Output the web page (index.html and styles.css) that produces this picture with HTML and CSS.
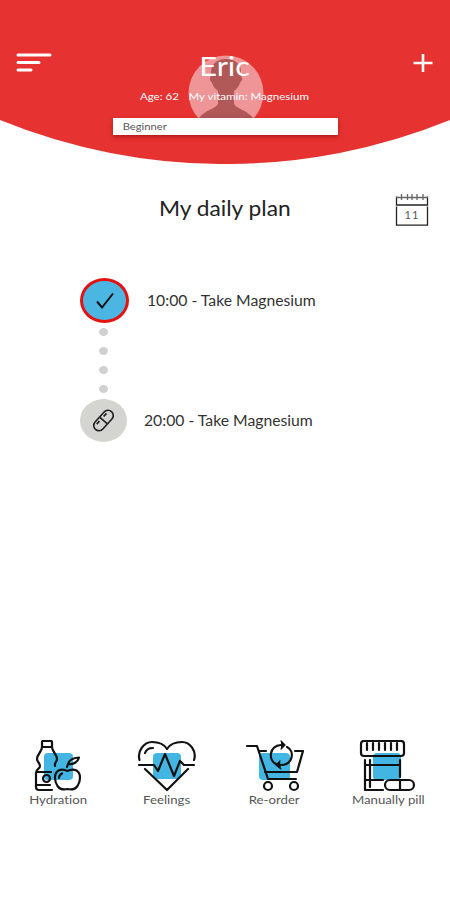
FILE: index.html
```html
<!DOCTYPE html>
<html lang="en">
<head>
  <meta charset="UTF-8" />
  <meta name="viewport" content="width=device-width, initial-scale=1" />
  <title>My daily plan</title>
  <link rel="stylesheet" href="styles.css">
</head>
<body>
  <header>
    <svg class="curve" viewBox="0 0 450 164"><path d="M0 0H450V120A597 597 0 0 1 0 120Z" fill="#e63230"/></svg>
    <svg class="avatar" viewBox="0 0 76 76">
      <circle cx="38" cy="38" r="37.500" fill="#ef9597"/>
      <path d="M38 4c-10 0-15 6-15 13 0 3 0 4-1 6s1 3 2 5c1 3 3 6 6 8v13c-3 5-13 6-19 14v3a37.500 37.500 0 0 0 54 0v-3c-6-8-16-9-19-14V36c3-2 5-5 6-8 1-2 3-3 2-5s-1-3-1-6c0-7-5-13-15-13z" fill="#b15858"/>
    </svg>
    <div class="top-bar">
      <svg class="menu-icon" viewBox="0 0 36 20" fill="none" stroke="#fff" stroke-width="3" stroke-linecap="round"><path d="M2 2H34M2 9.500H23M2 17H15"/></svg>
      <h1><span class="wide">Eric</span></h1>
      <svg class="add-icon" viewBox="0 0 20 20" fill="none" stroke="#fff" stroke-width="2.600"><path d="M.5 10H19.500M10 1V19"/></svg>
    </div>
    <div class="profile"><span class="wide">Age: 62</span><span class="wide">My vitamin: Magnesium</span></div>
    <div class="level"><span class="wide">Beginner</span></div>
  </header>
  <main>
    <div class="title-row">
      <h2><span class="wide">My daily plan</span></h2>
      <div class="calendar">
        <svg viewBox="0 0 34 34" fill="none" stroke="#222" stroke-width="1.300"><path d="M1.500 3.500V12H32.500V3.500M1.500 13.500V32.200H32.500V13.500"/><path d="M1 4.500H33M6.500 1v6M12.500 1v6M17 1v6M22 1v6M28 1v6" stroke="#666"/></svg>
        <span>11</span>
      </div>
    </div>
    <div class="plan">
      <div class="step">
        <div class="bullet done"><svg viewBox="0 0 20 20" fill="none" stroke="#111" stroke-width="2"><path d="M2 10.500L7 16.500L18 2.500"/></svg></div>
        <span class="wide">10:00 - Take Magnesium</span>
      </div>
      <div class="dots"><i></i><i></i><i></i><i></i></div>
      <div class="step next">
        <div class="bullet"><svg viewBox="0 0 24 24" fill="none" stroke="#222" stroke-width="1.600"><g transform="rotate(-48 12 12)"><rect x="0.500" y="7" width="23" height="10" rx="5"/><path d="M12 7V17M5 9.500H9M15 9.500H19"/></g></svg></div>
        <span class="wide">20:00 - Take Magnesium</span>
      </div>
    </div>
  </main>
  <nav>
    <div class="item">
      <svg viewBox="0 0 60 54">
        <rect x="16" y="13" width="29" height="27" rx="4" fill="#43b5e2"/>
        <g fill="none" stroke="#111" stroke-width="2.200" stroke-linecap="round" stroke-linejoin="round">
          <path d="M15 1h8q1 0 1 1v5h-10v-5q0-1 1-1zM14 7c0 5-5 7-5 12 0 3 3 4 3 7s-4 3-4 7v14c0 2 1 3 3 3h13M24 7c0 5 5 7 5 12 0 3-3 4-2 7M9 32h14M9 45h13"/>
          <circle cx="18.500" cy="38.500" r="3.500"/>
          <path d="M39.500 31c-3-1.500-6-2-9-.5-5 3-4 11-1 15.500 2.500 3.500 6 4 10 3 4 1 7.500.5 10-3 3-4.500 4-12.500-1-15.500-3-1.500-6-1-9 .5zM31 38c0-2 1-3.500 3-4.500M40 24c1-4 5-6 11-6.500-1 4.500-6 7.500-11 6.500zl-1 3"/>
        </g>
      </svg>
      <span class="wide">Hydration</span>
    </div>
    <div class="item feelings">
      <svg viewBox="0 0 60 54">
        <rect x="16" y="13" width="28" height="26" rx="4" fill="#43b5e2"/>
        <g fill="none" stroke="#111" stroke-width="2.200" stroke-linecap="round" stroke-linejoin="round">
          <path d="M2.500 20C0 11 7 2 15 2c7 0 12 2 15 7 3-5 8-7 15-7 8 0 15 9 12 18M8 29L30 50L51 29M8 13c1-3 4-5 8-5M2 25H17L21 31L28 14L37 36L43 21L47 25H57"/>
        </g>
      </svg>
      <span class="wide">Feelings</span>
    </div>
    <div class="item reorder">
      <svg viewBox="0 0 60 54">
        <rect x="14" y="13" width="31" height="27" rx="4" fill="#43b5e2"/>
        <g fill="none" stroke="#111" stroke-width="2.200" stroke-linecap="round" stroke-linejoin="round">
          <path d="M2 6H12L23 39H51M14 11H21M50 11H58L52 32H20"/>
          <circle cx="23" cy="46" r="4"/><circle cx="49" cy="46" r="4"/>
          <path d="M31 24C23 20 24 6 36 5M42 7C50 11 48 25 36 25"/>
          <path d="M36 1l4 4-4 4M35 21l-4 4 5 4" fill="#111" stroke-width="1.200"/>
        </g>
      </svg>
      <span class="wide">Re-order</span>
    </div>
    <div class="item">
      <svg viewBox="0 0 60 54">
        <rect x="15" y="13" width="28" height="27" rx="4" fill="#43b5e2"/>
        <g fill="none" stroke="#111" stroke-width="2.200" stroke-linecap="round" stroke-linejoin="round">
          <path d="M6 1H43Q46 1 46 4V13Q46 16 43 16H6Q3 16 3 13V4Q3 1 6 1M9 3V10M15 3V10M21 3V10M27 3V10M33 3V10M39 3V10M7 20V50H25M12 20V47M42 20V37M8 25H41M8 40H25"/>
          <rect x="27" y="40" width="29" height="10" rx="5" fill="#fff"/><path d="M42 40V50"/>
        </g>
      </svg>
      <span class="wide">Manually pill</span>
    </div>
  </nav>
</body>
</html>
```

FILE: styles.css
```css
* {
  box-sizing: border-box;
}
body {
  font-family: Lato, sans-serif;
  font-variant-ligatures: none;
  background: #fff;
  color: #333;
  margin: 0;
  width: 450px;
  height: 900px;
  display: flex;
  flex-direction: column;
}
h1, h2 {
  margin: 0;
  font-weight: 400;
}
svg {
  display: block;
}
/* letters are drawn slightly wider than tall */
.wide {
  display: inline-block;
  transform: scaleX(1.12);
  white-space: nowrap;
}
header {
  position: relative;
  height: 164px;
  padding-top: 50px;
  color: #fff;
}
.curve {
  position: absolute;
  top: 0;
  left: 0;
  width: 450px;
  height: 164px;
}
.avatar {
  position: absolute;
  top: 55px;
  left: 188px;
  width: 76px;
  height: 76px;
}
.top-bar, .profile, .level {
  position: relative;
}
.top-bar {
  display: flex;
  justify-content: space-between;
  align-items: center;
  height: 32px;
  padding: 0 17px 0 16px;
}
.menu-icon {
  width: 36px;
  height: 20px;
  margin-bottom: 7px;
}
.add-icon {
  width: 20px;
  height: 20px;
  margin-bottom: 7px;
}
h1 {
  font-size: 27.5px;
  line-height: 32px;
  padding-right: 15px;
}
.profile {
  display: flex;
  justify-content: center;
  gap: 18px;
  height: 36px;
  padding: 7px 5px 0 0;
  font-size: 10.3px;
  line-height: 14px;
}
.level {
  width: 225px;
  height: 17px;
  margin: 0 auto;
  padding-left: 12px;
  background: #fff;
  box-shadow: 0 2px 4px rgba(120, 0, 0, 0.5);
  color: #555;
  font-size: 10px;
  line-height: 17px;
}
.title-row {
  display: flex;
  justify-content: flex-end;
  align-items: center;
  padding: 29px 21px 0 0;
}
h2 {
  flex: 1;
  padding: 0 0 4px 55px;
  text-align: center;
  font-size: 20.3px;
  line-height: 30px;
  color: #222;
}
.calendar {
  display: grid;
  width: 34px;
  height: 34px;
}
.calendar svg, .calendar span {
  grid-area: 1 / 1;
}
.calendar span {
  padding-top: 14px;
  text-align: center;
  font-size: 11px;
  line-height: 16px;
  letter-spacing: 1px;
  color: #555;
}
.plan {
  padding: 51px 0 0 80px;
}
.step {
  display: flex;
  align-items: center;
  gap: 18px;
  font-size: 14.5px;
}
.step.next {
  gap: 17px;
}
.step .wide {
  transform: scaleX(1.085);
  transform-origin: left;
}
.bullet {
  display: flex;
  justify-content: center;
  align-items: center;
  width: 47px;
  height: 43px;
  border-radius: 50%;
  background: #d4d4d1;
}
.bullet svg {
  width: 25px;
  height: 25px;
}
.bullet.done {
  width: 49px;
  height: 45px;
  background: #4cb6e3;
  border: 3.5px solid #e3120f;
}
.bullet.done svg {
  width: 20px;
  height: 20px;
}
.dots {
  display: flex;
  flex-direction: column;
  gap: 11px;
  padding: 5px 0 6px 19px;
}
.dots i {
  width: 9px;
  height: 8px;
  border-radius: 50%;
  background: #d0d0d0;
}
nav {
  display: flex;
  justify-content: space-between;
  margin-top: auto;
  padding: 0 7px 93px 3px;
}
.item {
  display: flex;
  flex-direction: column;
  align-items: center;
  width: 110px;
  font-size: 11px;
  line-height: 14px;
  color: #555;
}
.item svg {
  width: 60px;
  height: 54px;
  margin: 1px 0 -1px;
}
.item .wide {
  transform: scaleX(1.2);
}
.item.feelings {
  padding-right: 2px;
}
.item.reorder {
  padding-right: 7px;
}
```
